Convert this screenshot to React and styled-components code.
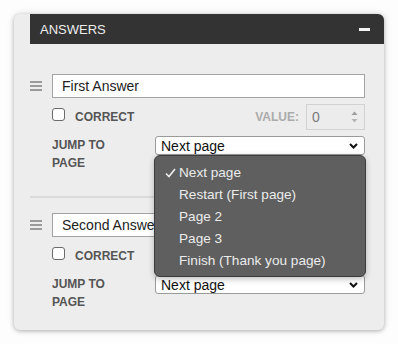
import React from "react";
import styled, { createGlobalStyle } from "styled-components";

const GlobalStyle = createGlobalStyle`
  body {
    margin: 0;
    background: #fdfdfd;
    font-family: "Liberation Sans", Arial, sans-serif;
  }
`;

const Page = styled.div`
  padding: 14px;
`;

const Panel = styled.div`
  width: 370px;
  height: 316px;
  box-sizing: border-box;
  background: #ededed;
  border-radius: 6px;
  box-shadow: 0 1px 4px rgba(0, 0, 0, 0.28), 0 0 10px rgba(0, 0, 0, 0.08);
  padding-left: 16px;
`;

const Header = styled.div`
  height: 30px;
  background: #333333;
  border-top-right-radius: 6px;
  display: flex;
  align-items: center;
  justify-content: space-between;
  padding: 0 14px 0 10px;
  color: #eeeeee;
  font-size: 13px;
`;

const Minus = styled.span`
  width: 11px;
  height: 3px;
  background: #f4f4f4;
`;

const Body = styled.div`
  padding: 30px 19px 0 0;
`;

const InputRow = styled.div`
  display: flex;
  align-items: center;
`;

const Handle = styled.div`
  width: 22px;
  display: flex;
  flex-direction: column;
  gap: 2px;
  span {
    display: block;
    width: 12px;
    height: 2px;
    background: #9a9a9a;
  }
`;

const TextInput = styled.div`
  flex: 1;
  height: 24px;
  box-sizing: border-box;
  border: 1px solid #a3a3a3;
  background: #fff;
  padding-left: 9px;
  display: flex;
  align-items: center;
  font-size: 14px;
  color: #222;
  white-space: nowrap;
  overflow: hidden;
`;

const Details = styled.div`
  margin-left: 22px;
`;

const CorrectRow = styled.div`
  margin-top: 6px;
  height: 26px;
  display: flex;
  align-items: center;
`;

const Checkbox = styled.span`
  width: 13px;
  height: 13px;
  box-sizing: border-box;
  border: 1px solid #6a6a6a;
  border-radius: 3px;
  background: #fff;
  margin-top: -5px;
`;

const Label = styled.span`
  font-size: 12px;
  font-weight: bold;
  color: ${(p) => (p.muted ? "#ababab" : "#555555")};
  margin-left: ${(p) => p.ml || 0}px;
  margin-right: ${(p) => p.mr || 0}px;
  line-height: 18px;
`;

const Spacer = styled.span`
  flex: 1;
`;

const NumberInput = styled.div`
  width: 59px;
  height: 26px;
  box-sizing: border-box;
  border: 1px solid #d2d2d2;
  background: #ececec;
  display: flex;
  align-items: center;
  justify-content: space-between;
  padding: 0 6px 0 5px;
  font-size: 14px;
  color: #7a7a7a;
`;

const JumpRow = styled.div`
  margin-top: 6px;
  display: flex;
  align-items: flex-start;
`;

const JumpLabel = styled.div`
  width: 103px;
  font-size: 12px;
  font-weight: bold;
  color: #555555;
  line-height: 18px;
`;

const SelectBox = styled.div`
  flex: 1;
  position: relative;
  height: 19px;
  box-sizing: border-box;
  border: 1px solid #9a9a9a;
  border-radius: 3px;
  background: #fff;
  display: flex;
  align-items: center;
  justify-content: space-between;
  padding: 0 6px 0 5px;
  font-size: 14px;
  color: #111;
`;

const Divider = styled.div`
  height: 2px;
  background: #dadada;
  margin: 24px 0 15px;
`;

const Menu = styled.div`
  position: absolute;
  top: 100%;
  left: -2px;
  right: -2px;
  margin-top: 1px;
  z-index: 5;
  background: #5e5f5e;
  border: 1px solid #3c3c3c;
  border-radius: 6px;
  box-shadow: 0 2px 6px rgba(0, 0, 0, 0.25);
  padding: 6px 0 4px;
`;

const MenuItem = styled.div`
  position: relative;
  height: 22px;
  line-height: 22px;
  padding-left: 24px;
  font-size: 13.6px;
  color: #ececec;
  white-space: nowrap;
`;

const Check = styled.svg`
  position: absolute;
  left: 10px;
  top: 6px;
`;

const options = [
  "Next page",
  "Restart (First page)",
  "Page 2",
  "Page 3",
  "Finish (Thank you page)",
];

function Chevron() {
  return (
    <svg width="9" height="6" viewBox="0 0 9 6">
      <path d="M1 1 L4.5 4.5 L8 1" fill="none" stroke="#111" strokeWidth="2" />
    </svg>
  );
}

function Spinner() {
  return (
    <svg width="7" height="14" viewBox="0 0 7 14">
      <path d="M0.5 5 L3.5 1.5 L6.5 5 Z" fill="#9c9c9c" />
      <path d="M0.5 9 L3.5 12.5 L6.5 9 Z" fill="#b4b4b4" />
    </svg>
  );
}

// the second answer's value field sits under the open menu, so it is left out
function Answer({ text, open, showValue }) {
  return (
    <div>
      <InputRow>
        <Handle>
          <span />
          <span />
          <span />
        </Handle>
        <TextInput>{text}</TextInput>
      </InputRow>
      <Details>
        <CorrectRow>
          <Checkbox />
          <Label ml={10}>CORRECT</Label>
          <Spacer />
          {showValue && (
            <>
              <Label muted mr={7}>
                VALUE:
              </Label>
              <NumberInput>
                0
                <Spinner />
              </NumberInput>
            </>
          )}
        </CorrectRow>
        <JumpRow>
          <JumpLabel>
            JUMP TO
            <br />
            PAGE
          </JumpLabel>
          <SelectBox>
            Next page
            <Chevron />
            {open && (
              <Menu>
                {options.map((o, i) => (
                  <MenuItem key={o}>
                    {i === 0 && (
                      <Check width="11" height="10" viewBox="0 0 11 10">
                        <path
                          d="M1 5.5 L4 8.5 L10 1"
                          fill="none"
                          stroke="#eeeeee"
                          strokeWidth="1.6"
                        />
                      </Check>
                    )}
                    {o}
                  </MenuItem>
                ))}
              </Menu>
            )}
          </SelectBox>
        </JumpRow>
      </Details>
    </div>
  );
}

export default function App() {
  return (
    <Page>
      <GlobalStyle />
      <Panel>
        <Header>
          ANSWERS
          <Minus />
        </Header>
        <Body>
          <Answer text="First Answer" open showValue />
          <Divider />
          <Answer text="Second Answer" />
        </Body>
      </Panel>
    </Page>
  );
}
